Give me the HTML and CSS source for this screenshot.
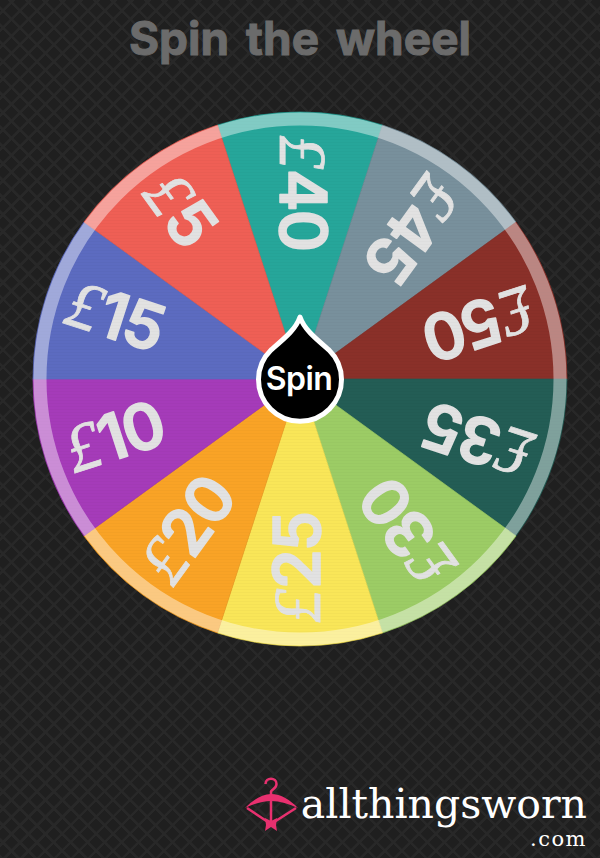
FILE: index.html
```html
<!DOCTYPE html>
<html lang="en">
<head>
    <meta charset="UTF-8" />
    <title>Spin the wheel</title>
    <link rel="stylesheet" href="styles.css">
</head>
<body>
    <div id="wrap">
        <h1 class="title">Spin the wheel</h1>
        <svg class="wheel" width="536" height="536" viewBox="-268 -268 536 536">
            <defs>
                <pattern id="weave" width="3" height="3" patternUnits="userSpaceOnUse">
                    <path d="M0 0H3" stroke="#000" stroke-opacity=".04" stroke-width="1" />
                </pattern>
            </defs>
            <g transform="rotate(-90)"><path class="seg teal" d="M0 0L254 -82.5A267 267 0 0 1 254 82.5Z" /><text class="amt" transform="rotate(180)" x="-244" y="20"><tspan class="pound">£</tspan>40</text></g>
            <g transform="rotate(-54)"><path class="seg grey" d="M0 0L254 -82.5A267 267 0 0 1 254 82.5Z" /><text class="amt" transform="rotate(180)" x="-244" y="20"><tspan class="pound">£</tspan>45</text></g>
            <g transform="rotate(-18)"><path class="seg brown" d="M0 0L254 -82.5A267 267 0 0 1 254 82.5Z" /><text class="amt" transform="rotate(180)" x="-244" y="20"><tspan class="pound">£</tspan>50</text></g>
            <g transform="rotate(18)"><path class="seg pine" d="M0 0L254 -82.5A267 267 0 0 1 254 82.5Z" /><text class="amt" transform="rotate(180)" x="-244" y="20"><tspan class="pound">£</tspan>35</text></g>
            <g transform="rotate(54)"><path class="seg lime" d="M0 0L254 -82.5A267 267 0 0 1 254 82.5Z" /><text class="amt" transform="rotate(180)" x="-244" y="20"><tspan class="pound">£</tspan>30</text></g>
            <g transform="rotate(90)"><path class="seg yellow" d="M0 0L254 -82.5A267 267 0 0 1 254 82.5Z" /><text class="amt" transform="rotate(180)" x="-244" y="20"><tspan class="pound">£</tspan>25</text></g>
            <g transform="rotate(126)"><path class="seg orange" d="M0 0L254 -82.5A267 267 0 0 1 254 82.5Z" /><text class="amt" transform="rotate(180)" x="-244" y="20"><tspan class="pound">£</tspan>20</text></g>
            <g transform="rotate(162)"><path class="seg purple" d="M0 0L254 -82.5A267 267 0 0 1 254 82.5Z" /><text class="amt" transform="rotate(180)" x="-244" y="20"><tspan class="pound">£</tspan>10</text></g>
            <g transform="rotate(198)"><path class="seg blue" d="M0 0L254 -82.5A267 267 0 0 1 254 82.5Z" /><text class="amt" transform="rotate(180)" x="-244" y="20"><tspan class="pound">£</tspan>15</text></g>
            <g transform="rotate(234)"><path class="seg red" d="M0 0L254 -82.5A267 267 0 0 1 254 82.5Z" /><text class="amt" transform="rotate(180)" x="-244" y="20"><tspan class="pound">£</tspan>5</text></g>
            <circle r="267" fill="url(#weave)" />
            <circle class="rim" r="260" />
            <path class="pin" d="M0 -62C4 -50 15 -41 29 -29A41.5 41.5 0 1 1 -29 -29C-15 -41 -4 -50 0 -62Z" />
            <text class="spin" x="-1" y="11">Spin</text>
        </svg>
        <footer class="brand">
            <svg class="hanger" width="56" height="56" viewBox="0 0 56 56">
                <path class="hook" d="M27 18V14.5C28 12.5 32.500 11.500 32.500 7C32.500 0 21.500 0 21.500 7" />
                <path class="bow" d="M1 31C9 23 18 17 27 17C37 17 46 23 54 31C45 27 36 24 27 24C18 24 10 27 1 31Z" />
                <path class="cord" d="M3 31L27 47L52 31M27 20V47" />
                <path class="tail" d="M21 41L27 44L33 41L32 48L33 54L27 50L21 54L22 48Z" />
            </svg>
            <div class="brand-name">
                <span class="brand-main">allthingsworn</span>
                <span class="brand-tld">.com</span>
            </div>
        </footer>
    </div>
</body>
</html>
```

FILE: styles.css
```css
html,body{
    margin: 0;
    padding: 0;
}
body{
    background-color: #1f1f1f;
    background-image:
        repeating-linear-gradient(45deg, #282828 0, #282828 2px, transparent 3px, transparent 12px),
        repeating-linear-gradient(-45deg, #282828 0, #282828 2px, transparent 3px, transparent 12px);
}
#wrap{
    width: 600px;
    height: 858px;
    overflow: hidden;
    display: flex;
    flex-direction: column;
    align-items: center;
}
.title{
    margin: 12px 0 0;
    height: 99px;
    font: 700 46px/52px Inter, sans-serif;
    word-spacing: 6px;
    color: #6b6b6b;
    -webkit-text-stroke: 1px #6b6b6b;
}
.wheel{
    flex: none;
}
.seg{
    fill: currentColor;
    stroke: currentColor;
    stroke-width: .6;
}
.teal{ color: #26a69a; }
.grey{ color: #78909c; }
.brown{ color: #8a3029; }
.pine{ color: #235d55; }
.lime{ color: #9ccc65; }
.yellow{ color: #f9e658; }
.orange{ color: #f9a326; }
.purple{ color: #a53bb9; }
.blue{ color: #5c6bc0; }
.red{ color: #ef5f55; }
.rim{
    fill: none;
    stroke: #fff;
    stroke-opacity: .42;
    stroke-width: 13;
}
.amt{
    font: 600 64px Inter, sans-serif;
    letter-spacing: -2px;
    fill: #e2e2e2;
    stroke: #e2e2e2;
    stroke-width: 1.5;
    stroke-linejoin: round;
}
.pound{
    font: italic 400 68px "Liberation Serif", serif;
    letter-spacing: 0;
    stroke-width: .8;
}
.pin{
    fill: #000;
    stroke: #fff;
    stroke-width: 5;
    stroke-linejoin: round;
}
.spin{
    font: 600 32px Inter, sans-serif;
    letter-spacing: -.5px;
    fill: #fff;
    text-anchor: middle;
}
.brand{
    align-self: flex-end;
    margin: 130px 13px 0 0;
    display: flex;
    align-items: flex-start;
    gap: 1px;
}
.hanger{
    flex: none;
}
.hook,.cord{
    fill: none;
    stroke: #e8306f;
    stroke-width: 2.5;
}
.bow,.tail{
    fill: #e8306f;
}
.brand-name{
    display: flex;
    flex-direction: column;
    align-items: flex-end;
    font-family: "DejaVu Serif", serif;
    color: #fff;
}
.brand-main{
    padding-top: 3px;
    font-size: 41px;
    line-height: 48px;
}
.brand-tld{
    font-size: 21px;
    line-height: 22px;
    letter-spacing: 1.5px;
}
```
